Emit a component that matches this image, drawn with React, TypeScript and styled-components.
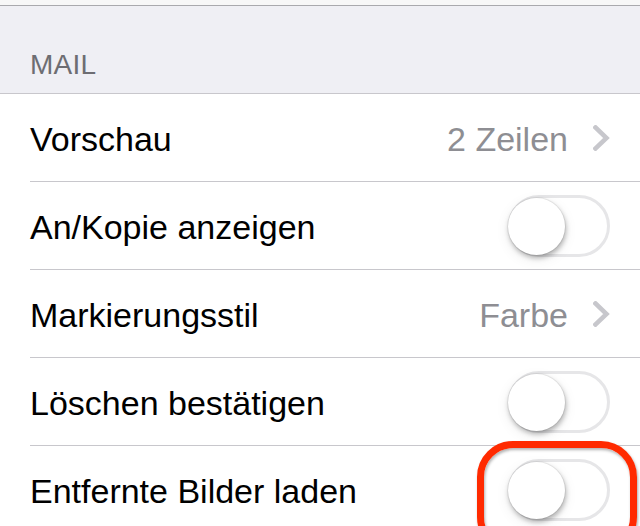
import React from "react";
import styled, { createGlobalStyle } from "styled-components";

const Global = createGlobalStyle`
  html, body { margin: 0; padding: 0; background: #ffffff; }
  body { width: 640px; height: 526px; overflow: hidden; font-family: "Liberation Sans", Arial, sans-serif; }
`;

const Page = styled.div`
  width: 640px;
  height: 526px;
  overflow: hidden;
  background: #ffffff;
`;

const TopStrip = styled.div`
  height: 5px;
  background: #f7f7f7;
  border-bottom: 1px solid #a9a9ad;
`;

const SectionHeader = styled.div`
  height: 88px;
  background: #efeff4;
  border-bottom: 1px solid #c8c7cc;
  box-sizing: border-box;
  padding-left: 30px;
  display: flex;
  align-items: flex-end;
  padding-bottom: 14px;
  font-size: 28px;
  color: #6d6d72;
  letter-spacing: 0.2px;
  line-height: 1;
`;

const Row = styled.div`
  padding-left: 30px;
  background: #ffffff;
`;

const RowInner = styled.div<{ $last?: boolean }>`
  height: 88px;
  box-sizing: border-box;
  border-bottom: ${(p) => (p.$last ? "none" : "1px solid #c8c7cc")};
  padding-right: 30px;
  display: flex;
  align-items: center;
`;

const Label = styled.span`
  flex: 1;
  font-size: 34px;
  color: #000000;
  line-height: 1;
  padding-top: 2px;
`;

const Value = styled.span`
  font-size: 34px;
  color: #8e8e93;
  line-height: 1;
  padding-top: 2px;
  margin-right: 25px;
`;

const Chevron = styled.svg`
  width: 17px;
  height: 26px;
  display: block;
`;

const SwitchWrap = styled.div`
  position: relative;
  width: 102px;
  height: 62px;
`;

const Track = styled.div`
  width: 102px;
  height: 62px;
  box-sizing: border-box;
  border-radius: 31px;
  border: 3px solid #e6e6e8;
  background: #ffffff;
`;

const Knob = styled.div`
  position: absolute;
  left: 0px;
  top: 3px;
  width: 57px;
  height: 57px;
  border-radius: 50%;
  background: #ffffff;
  box-shadow: 0 0 0 1px rgba(0, 0, 0, 0.06), 1px 3px 5px rgba(0, 0, 0, 0.28), 0 4px 14px rgba(0, 0, 0, 0.08);
`;

const Highlight = styled.div`
  position: absolute;
  left: -31px;
  top: -18px;
  width: 160px;
  height: 112px;
  box-sizing: border-box;
  border: 7px solid #ff2a00;
  border-radius: 36px;
  box-shadow: 1px 2px 3px rgba(0, 0, 0, 0.35), inset 1px 2px 3px rgba(0, 0, 0, 0.3);
  pointer-events: none;
`;

const ChevronIcon = () => (
  <Chevron viewBox="0 0 17 26">
    <polyline
      points="2.5,2.5 13.5,13 2.5,23.5"
      fill="none"
      stroke="#c7c7cc"
      strokeWidth="4.5"
      strokeLinecap="square"
      strokeLinejoin="miter"
    />
  </Chevron>
);

const Switch = ({ highlighted }: { highlighted?: boolean }) => (
  <SwitchWrap>
    <Track />
    <Knob />
    {highlighted && <Highlight />}
  </SwitchWrap>
);

type Item =
  | { label: string; kind: "value"; value: string }
  | { label: string; kind: "switch"; highlighted?: boolean };

const items: Item[] = [
  { label: "Vorschau", kind: "value", value: "2 Zeilen" },
  { label: "An/Kopie anzeigen", kind: "switch" },
  { label: "Markierungsstil", kind: "value", value: "Farbe" },
  { label: "Löschen bestätigen", kind: "switch" },
  { label: "Entfernte Bilder laden", kind: "switch", highlighted: true },
];

export default function App() {
  return (
    <Page>
      <Global />
      <TopStrip />
      <SectionHeader>MAIL</SectionHeader>
      {items.map((it, i) => (
        <Row key={it.label}>
          <RowInner $last={i === items.length - 1}>
            <Label>{it.label}</Label>
            {it.kind === "value" ? (
              <>
                <Value>{it.value}</Value>
                <ChevronIcon />
              </>
            ) : (
              <Switch highlighted={it.highlighted} />
            )}
          </RowInner>
        </Row>
      ))}
    </Page>
  );
}
